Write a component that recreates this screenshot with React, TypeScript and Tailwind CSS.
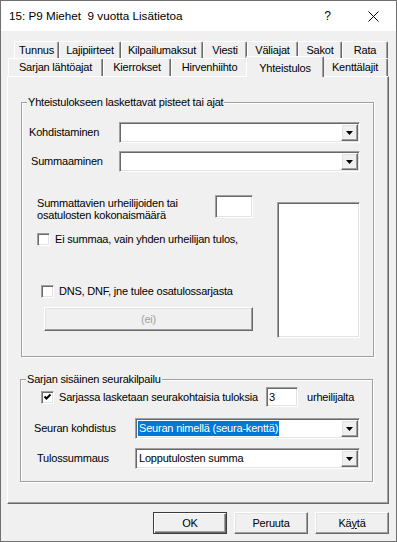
import type { ReactNode } from "react";

const sunken =
  "border border-t-[#a0a0a0] border-l-[#a0a0a0] border-b-white border-r-white bg-white shadow-[inset_1px_1px_0_#696969,inset_-1px_-1px_0_#e3e3e3]";
const raised =
  "border border-t-white border-l-white border-b-[#696969] border-r-[#696969] bg-[#f0f0f0] shadow-[inset_-1px_-1px_0_#a0a0a0,inset_1px_1px_0_#e3e3e3]";
const group =
  "flex w-[353px] flex-col border border-[#a0a0a0] shadow-[1px_1px_0_#fff,inset_1px_1px_0_#fff]";
const legend = "-mt-[7px] ml-[5px] w-fit bg-[#f0f0f0] px-px leading-[13px]";

const row1 = [
  { label: "Tunnus", w: "w-[45px]" },
  { label: "Lajipiirteet", w: "w-[62px]" },
  { label: "Kilpailumaksut", w: "w-[82px]" },
  { label: "Viesti", w: "w-[44px]" },
  { label: "Väliajat", w: "w-[51px]" },
  { label: "Sakot", w: "w-[44px]" },
  { label: "Rata", w: "w-[46px]" },
];

const row2 = [
  { label: "Sarjan lähtöajat", w: "w-[95px]" },
  { label: "Kierrokset", w: "w-[68px]" },
  { label: "Hirvenhiihto", w: "w-[77px]" },
  { label: "Yhteistulos", w: "w-[78px]", selected: true },
  { label: "Kenttälajit", w: "w-[66px]" },
];

function Tab({ label, w, selected }: { label: string; w: string; selected?: boolean }) {
  if (selected) {
    return (
      <div
        className={`${w} relative z-10 -mx-[2px] -mt-[2px] flex h-[21px] items-start justify-center rounded-t-[2px] border-l border-t border-r border-l-white border-t-white border-r-[#696969] bg-[#f0f0f0] pt-[3px] shadow-[inset_-1px_0_0_#a0a0a0]`}
      >
        {label}
      </div>
    );
  }
  return (
    <div
      className={`${w} flex h-full items-center justify-center rounded-t-[2px] border-l border-t border-r border-l-white border-t-white border-r-[#696969] shadow-[inset_-1px_0_0_#a0a0a0]`}
    >
      {label}
    </div>
  );
}

function Combo({ w, children }: { w: string; children?: ReactNode }) {
  return (
    <div className={`${sunken} ${w} flex h-[21px] items-center p-px`}>
      <div className="flex h-full min-w-0 flex-1 items-center pl-px">{children}</div>
      <div className={`${raised} flex h-[17px] w-[17px] items-center justify-center`}>
        <svg width="7" height="4" viewBox="0 0 7 4">
          <path d="M0 0h7L3.5 4z" fill="#000" />
        </svg>
      </div>
    </div>
  );
}

function Check({ checked }: { checked?: boolean }) {
  return (
    <div className={`${sunken} flex h-[13px] w-[13px] shrink-0 items-center justify-center`}>
      {checked ? (
        <svg width="9" height="9" viewBox="0 0 9 9">
          <path d="M1.5 3.5l2 2 4-4" fill="none" stroke="#000" strokeWidth="2" />
        </svg>
      ) : null}
    </div>
  );
}

export default function App() {
  return (
    <div className="flex h-[542px] w-[397px] flex-col border border-[#707070] bg-[#f0f0f0] text-[11px] tracking-[-0.2px] text-black [font-family:'Liberation_Sans',Arial,sans-serif]">
      {/* title bar */}
      <div className="flex h-[30px] shrink-0 items-center bg-white pl-[8px] text-[11.7px] tracking-normal">
        <span className="flex-1 whitespace-pre">15: P9 Miehet  9 vuotta Lisätietoa</span>
        <span className="mr-[37px] text-[12px]">?</span>
        <svg className="mr-[17px]" width="11" height="11" viewBox="0 0 11 11">
          <path d="M0.5 0.5l10 10M10.5 0.5l-10 10" stroke="#000" strokeWidth="1" />
        </svg>
      </div>

      <div className="ml-[6px] flex w-[382px] flex-col pt-[10px]">
        {/* tabs */}
        <div className="ml-[7px] flex h-[17px]">
          {row1.map((t) => (
            <Tab key={t.label} {...t} />
          ))}
        </div>
        <div className="ml-px flex h-[18px] items-start">
          {row2.map((t) => (
            <Tab key={t.label} {...t} />
          ))}
        </div>

        {/* tab panel */}
        <div className="flex h-[428px] flex-col border border-l-white border-t-white border-r-[#696969] border-b-[#696969] shadow-[inset_-1px_-1px_0_#a0a0a0]">
          <div className={`${group} ml-[13px] mt-[25px] h-[255px]`}>
            <span className={legend}>Yhteistulokseen laskettavat pisteet tai ajat</span>

            <div className="mt-[13px] flex items-center pl-[7px]">
              <span className="w-[90px]">Kohdistaminen</span>
              <Combo w="w-[241px]" />
            </div>
            <div className="mt-[8px] flex items-center pl-[9px]">
              <span className="w-[88px]">Summaaminen</span>
              <Combo w="w-[241px]" />
            </div>

            <div className="mt-[23px] flex pl-[15px]">
              <div className="flex w-[216px] flex-col">
                <div className="flex h-[26px] items-start">
                  <span className="mt-[2px] w-[178px] leading-[12px]">
                    Summattavien urheilijoiden tai
                    <br />
                    osatulosten kokonaismäärä
                  </span>
                  <div className={`${sunken} h-[23px] w-[38px]`} />
                </div>
                <div className="mt-[12px] flex h-[13px] items-center gap-[5px]">
                  <Check />
                  <span>Ei summaa, vain yhden urheilijan tulos,</span>
                </div>
                <div className="ml-[4px] mt-[39px] flex h-[13px] items-center gap-[5px]">
                  <Check />
                  <span>DNS, DNF, jne tulee osatulossarjasta</span>
                </div>
                <div
                  className={`${raised} ml-[7px] mt-[9px] flex h-[24px] w-[209px] items-center justify-center text-[#a0a0a0]`}
                >
                  (ei)
                </div>
              </div>
              <div className={`${sunken} ml-[24px] mt-[7px] h-[136px] w-[83px]`} />
            </div>
          </div>

          <div className={`${group} ml-[12px] mt-[22px] h-[103px]`}>
            <span className={legend}>Sarjan sisäinen seurakilpailu</span>

            <div className="mt-px flex h-[20px] items-center pl-[20px]">
              <Check checked />
              <span className="ml-[5px] w-[207px]">Sarjassa lasketaan seurakohtaisia tuloksia</span>
              <div className={`${sunken} flex h-[20px] w-[32px] items-center pl-[2px]`}>3</div>
              <span className="ml-[9px]">urheilijalta</span>
            </div>
            <div className="mt-[11px] flex items-center pl-[13px]">
              <span className="w-[101px]">Seuran kohdistus</span>
              <Combo w="w-[225px]">
                <span className="bg-[#0078d7] px-px leading-[15px] text-white">
                  Seuran nimellä (seura-kenttä)
                </span>
              </Combo>
            </div>
            <div className="mt-[9px] flex items-center pl-[16px]">
              <span className="w-[98px]">Tulossummaus</span>
              <Combo w="w-[225px]">
                <span className="pl-px">Lopputulosten summa</span>
              </Combo>
            </div>
          </div>
        </div>

        {/* dialog buttons */}
        <div className="mt-[8px] flex justify-end gap-[7px]">
          <button className="flex h-[22px] w-[74px] items-center justify-center border border-[#3c3c3c] bg-[#f0f0f0] shadow-[inset_1px_1px_0_#fff,inset_-1px_-1px_0_#696969,inset_-2px_-2px_0_#a0a0a0]">
            OK
          </button>
          <button className={`${raised} flex h-[22px] w-[74px] items-center justify-center`}>
            Peruuta
          </button>
          <button className={`${raised} flex h-[22px] w-[74px] items-center justify-center`}>
            <span>
              Kä<span className="underline">y</span>tä
            </span>
          </button>
        </div>
      </div>
    </div>
  );
}
